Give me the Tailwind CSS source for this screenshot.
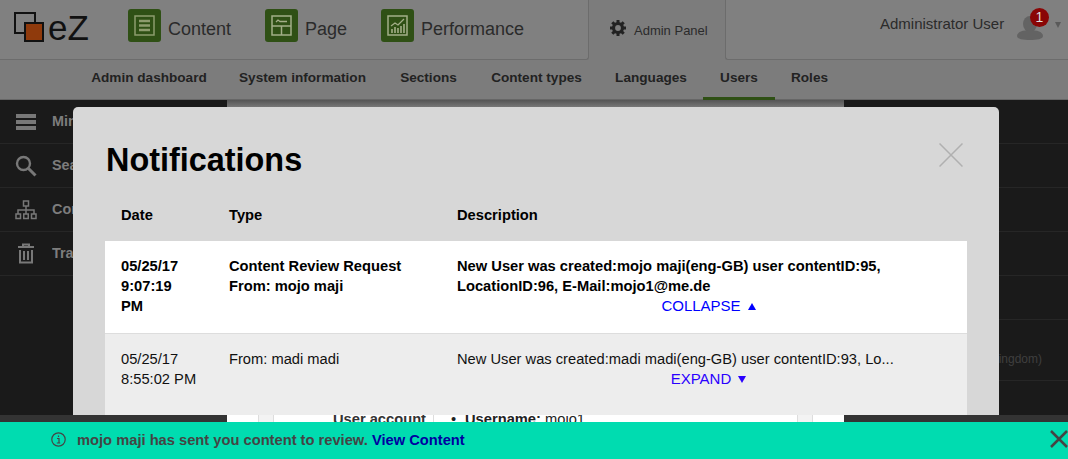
<!DOCTYPE html>
<html lang="en">
<head>
    <meta charset="UTF-8">
    <title>Notifications</title>
    <script src="https://cdn.jsdelivr.net/npm/@tailwindcss/browser@4"></script>
</head>
<body class="bg-[#1a1a1a]">
<div class="relative w-[1068px] h-[459px] overflow-hidden flex flex-col font-['Liberation_Sans',Arial,sans-serif]">
    <!-- Header -->
    <header class="h-[60px] flex shrink-0 bg-[#7c7c7c]">
        <div class="w-[589px] flex items-start bg-[#808080] border-b border-r border-[#6c6c6c] rounded-br-[3px]">
            <a class="relative w-[128px] h-[59px] shrink-0">
                <svg class="absolute left-[14px] top-[12px]" width="30" height="30" viewBox="0 0 30 30">
                    <rect x="1" y="1" width="20" height="20" fill="none" stroke="#111" stroke-width="2"/>
                    <rect x="11" y="11" width="18" height="18" fill="#8f3a0c" stroke="#111" stroke-width="2"/>
                </svg>
                <span class="absolute left-[48px] top-[8px] text-[35px] leading-[40px] text-[#111]">eZ</span>
            </a>
            <a class="flex items-center h-[33px] mt-[9px] w-[137px]">
                <span class="w-[33px] h-[33px] rounded-[3px] bg-[#2f5015] flex items-center justify-center">
                    <svg width="21" height="21" viewBox="0 0 21 21" fill="none" stroke="#8d9c6e">
                        <rect x="1" y="1" width="19" height="19" stroke-width="1.5"/>
                        <path d="M5 6h11M5 10.500h11M5 15h11" stroke-width="2.600"/>
                    </svg>
                </span>
                <span class="ml-[7px] pt-[7px] text-[18px] text-[#2b2b2b]">Content</span>
            </a>
            <a class="flex items-center h-[33px] mt-[9px] w-[116px]">
                <span class="w-[33px] h-[33px] rounded-[3px] bg-[#2f5015] flex items-center justify-center">
                    <svg width="21" height="21" viewBox="0 0 21 21" fill="none" stroke="#a3ae88">
                        <rect x="1" y="1" width="19" height="19" stroke-width="1.500"/>
                        <path d="M1 11h19M10.500 11v9" stroke-width="1.500"/>
                        <path d="M5 7l2-2 2 1.500h7" stroke-width="1.300"/>
                    </svg>
                </span>
                <span class="ml-[7px] pt-[7px] text-[18px] text-[#2b2b2b]">Page</span>
            </a>
            <a class="flex items-center h-[33px] mt-[9px]">
                <span class="w-[33px] h-[33px] rounded-[3px] bg-[#2f5015] flex items-center justify-center">
                    <svg width="21" height="21" viewBox="0 0 21 21" fill="none" stroke="#a3ae88">
                        <rect x="1" y="1" width="19" height="19" stroke-width="1.500"/>
                        <path d="M4 11l4-3 3 2 6-6" stroke-width="1.300"/>
                        <path d="M5 18v-4M8 18v-6M11 18v-5M14 18v-7M17 18v-9" stroke-width="1.600"/>
                    </svg>
                </span>
                <span class="ml-[7px] pt-[7px] text-[18px] text-[#2b2b2b]">Performance</span>
            </a>
        </div>
        <a class="w-[136px] flex items-center pl-[21px] pt-[1px] gap-[8px]">
            <svg class="-mt-[5px]" width="16" height="16" viewBox="0 0 16 16" fill="#222">
                <circle cx="8" cy="8" r="4.500" fill="none" stroke="#222" stroke-width="3.200"/>
                <g stroke="#222" stroke-width="3">
                    <path d="M8 0v3M8 13v3M0 8h3M13 8h3M2.300 2.300l2.100 2.100M11.600 11.600l2.100 2.100M13.700 2.300l-2.100 2.100M4.400 11.600l-2.100 2.100"/>
                </g>
            </svg>
            <span class="text-[13px] text-[#2b2b2b]">Admin Panel</span>
        </a>
        <div class="relative flex-1 bg-[#808080] border-b border-l border-[#6c6c6c] rounded-bl-[3px]">
            <span class="absolute left-[154px] top-[15px] text-[15px] leading-[18px] text-[#2b2b2b] whitespace-nowrap">Administrator User</span>
            <svg class="absolute left-[291px] top-[16px]" width="26" height="24" viewBox="0 0 26 24" fill="#636363">
                <ellipse cx="13" cy="8" rx="7" ry="8"/>
                <path d="M0 20c0-4 6-6 13-6s13 2 13 6c0 3-6 4-13 4S0 23 0 20z"/>
            </svg>
            <span class="absolute left-[304px] top-[8px] w-[19px] h-[19px] rounded-full bg-[#8a0606] text-[#ddd] text-[14px] leading-[19px] text-center">1</span>
            <span class="absolute left-[329px] top-[22px] w-0 h-0 border-x-[3.500px] border-x-transparent border-t-[6px] border-t-[#5a5a5a]"></span>
        </div>
    </header>

    <!-- Sub navigation -->
    <nav class="h-[40px] shrink-0 bg-[#7c7c7c] flex pl-[76px] text-[13.600px] font-bold text-[#222] text-center border-b border-[#666]">
        <a class="w-[146px] leading-[36px]">Admin dashboard</a>
        <a class="w-[161px] leading-[36px]">System information</a>
        <a class="w-[91px] leading-[36px]">Sections</a>
        <a class="w-[125px] leading-[36px]">Content types</a>
        <a class="w-[104px] leading-[36px]">Languages</a>
        <a class="w-[72px] leading-[36px] h-[40px] border-b-[3px] border-[#2f5015]">Users</a>
        <a class="w-[69px] leading-[36px]">Roles</a>
    </nav>

    <!-- Page behind the dialog -->
    <main class="flex-1 flex min-h-0">
        <aside class="w-[227px] flex flex-col">
            <div class="flex-1 bg-[#1a1a1a] text-[14.400px] font-bold text-[#7d7d7d]">
                <div class="h-[43px] flex items-center border-b border-[#262626] box-content">
                    <svg class="ml-[16px] mr-[16px]" width="20" height="16" viewBox="0 0 20 16" fill="#787878"><rect width="20" height="4"/><rect y="6" width="20" height="4"/><rect y="12" width="20" height="4"/></svg>
                    <span class="w-[21px] overflow-hidden whitespace-nowrap">Minimize</span>
                </div>
                <div class="h-[43px] flex items-center border-b border-[#262626] box-content">
                    <svg class="ml-[15px] mr-[15px]" width="22" height="22" viewBox="0 0 22 22" fill="none" stroke="#787878"><circle cx="8.500" cy="8.500" r="6.500" stroke-width="2.400"/><path d="M13.500 13.500L20.500 20.500" stroke-width="3"/></svg>
                    <span class="w-[21px] overflow-hidden whitespace-nowrap">Search</span>
                </div>
                <div class="h-[43px] flex items-center border-b border-[#262626] box-content">
                    <svg class="ml-[15px] mr-[15px]" width="22" height="20" viewBox="0 0 22 20" fill="none" stroke="#787878" stroke-width="1.500"><rect x="8.500" y="1" width="5" height="5"/><path d="M11 6v4M3 14v-4h16v4M11 10v4"/><rect x="1" y="14" width="4.500" height="4.500"/><rect x="8.750" y="14" width="4.500" height="4.500"/><rect x="16.500" y="14" width="4.500" height="4.500"/></svg>
                    <span class="w-[21px] overflow-hidden whitespace-nowrap">Content tree</span>
                </div>
                <div class="h-[43px] flex items-center border-b border-[#262626] box-content">
                    <svg class="ml-[18px] mr-[18px]" width="16" height="21" viewBox="0 0 16 21" fill="none" stroke="#787878" stroke-width="2"><path d="M0 4h16M5 4V1.500h6V4"/><path d="M2 7v12.500h12V7M6 8v9M10 8v9"/></svg>
                    <span class="w-[21px] overflow-hidden whitespace-nowrap">Trash</span>
                </div>
            </div>
            <div class="h-[44px] bg-[#333]"></div>
        </aside>

        <section class="flex-1 flex flex-col bg-[#777]">
            <div class="h-[7px] bg-gradient-to-b from-[#555] to-[#777]"></div>
            <div class="flex-1"></div>
            <div class="h-[51px] bg-white overflow-hidden flex">
                <div class="ml-[31px] w-[16px] bg-[#f3f3f3] border-x border-[#ddd]"></div>
                <div class="w-[160px] pt-[1px] pr-[7px] text-right text-[14.700px] leading-5 font-bold text-[#333] border-r border-[#ddd]">User account</div>
                <div class="w-[363px] pt-[1px] pl-[17px] text-[14.700px] leading-5 text-[#222] flex">
                    <span class="w-[14px]">•</span><span><b>Username:</b> mojo1</span>
                </div>
                <div class="w-[16px] bg-[#f3f3f3] border-x border-[#ddd]"></div>
            </div>
        </section>

        <aside class="w-[224px] flex flex-col">
            <div class="flex-1 bg-[#1a1a1a] text-[12px] text-[#3f3f3f]">
                <div class="h-[44px] border-b border-[#262626]"></div>
                <div class="h-[44px] border-b border-[#262626]"></div>
                <div class="h-[44px] border-b border-[#262626]"></div>
                <div class="h-[44px] border-b border-[#262626]"></div>
                <div class="h-[44px] border-b border-[#262626]"></div>
                <div class="h-[61px] border-b border-[#262626] flex justify-end pr-[26px] pt-[30px] whitespace-nowrap overflow-hidden">
                    <span class="w-[43px] overflow-hidden flex justify-end">English&nbsp;(United&nbsp;Kingdom)</span>
                </div>
            </div>
            <div class="h-[44px] bg-[#333]"></div>
        </aside>
    </main>

    <!-- Notifications dialog -->
    <div class="absolute left-[73px] top-[107px] w-[926px] h-[308px] overflow-hidden rounded-t-[5px] bg-[#d7d7d7] px-[32px] text-[14.700px] leading-5 text-[#111]">
        <h1 class="pt-[33px] pl-[1px] text-[32.400px] leading-[40px] font-bold text-black">Notifications</h1>
        <svg class="absolute left-[866px] top-[36px]" width="24" height="24" viewBox="0 0 24 24" fill="none" stroke="#b0b0b0" stroke-width="1.500"><path d="M0.500 0.500l23 23M23.500 0.500l-23 23"/></svg>
        <div class="mt-[25px] pb-[16px] pl-4 grid grid-cols-[108px_228px_1fr] font-bold text-black">
            <div>Date</div><div>Type</div><div>Description</div>
        </div>
        <div class="bg-white border-b border-[#ddd] pt-[15px] pb-[17px] pl-4 pr-[7px] grid grid-cols-[108px_228px_1fr] font-bold text-black">
            <div>05/25/17<br>9:07:19<br>PM</div>
            <div>Content Review Request<br>From: mojo maji</div>
            <div>
                New User was created:mojo maji(eng-GB) user contentID:95,<br>LocationID:96, E-Mail:mojo1@me.de
                <div class="flex justify-center items-center gap-[7px] text-[15px] font-normal text-[#0000ff]">COLLAPSE <span class="w-0 h-0 border-x-[4px] border-x-transparent border-b-[7px] border-b-[#0000ff]"></span></div>
            </div>
        </div>
        <div class="bg-[#ededed] border-b border-[#ddd] pt-[15px] pb-[34px] pl-4 pr-[7px] grid grid-cols-[108px_228px_1fr]">
            <div>05/25/17<br>8:55:02 PM</div>
            <div>From: madi madi</div>
            <div>
                New User was created:madi madi(eng-GB) user contentID:93, Lo...
                <div class="flex justify-center items-center gap-[7px] text-[15px] text-[#2a00ff]">EXPAND <span class="w-0 h-0 border-x-[4px] border-x-transparent border-t-[7px] border-t-[#2a00ff]"></span></div>
            </div>
        </div>
    </div>

    <!-- Notification bar -->
    <div class="absolute left-0 bottom-0 w-full h-[37px] bg-[#00dcb0] flex items-center pl-[51px] text-[14.700px] font-bold text-[#444]">
        <svg class="mr-[11px] -mt-[3px]" width="15" height="15" viewBox="0 0 15 15" fill="none" stroke="#444"><circle cx="7.500" cy="7.500" r="6.700" stroke-width="1.200"/><path d="M6 6.500h2v4.500M5.800 11h3.400M7.500 3.400v1.600" stroke-width="1.200"/></svg>
        <span>mojo maji has sent you content to review. <a class="text-[#0000a0]">View Content</a></span>
        <svg class="absolute left-[1050px] top-[8px]" width="18" height="18" viewBox="0 0 18 18" fill="none" stroke="#444" stroke-width="2.500"><path d="M1 1l16 16M17 1L1 17"/></svg>
    </div>
</div>
</body>
</html>
